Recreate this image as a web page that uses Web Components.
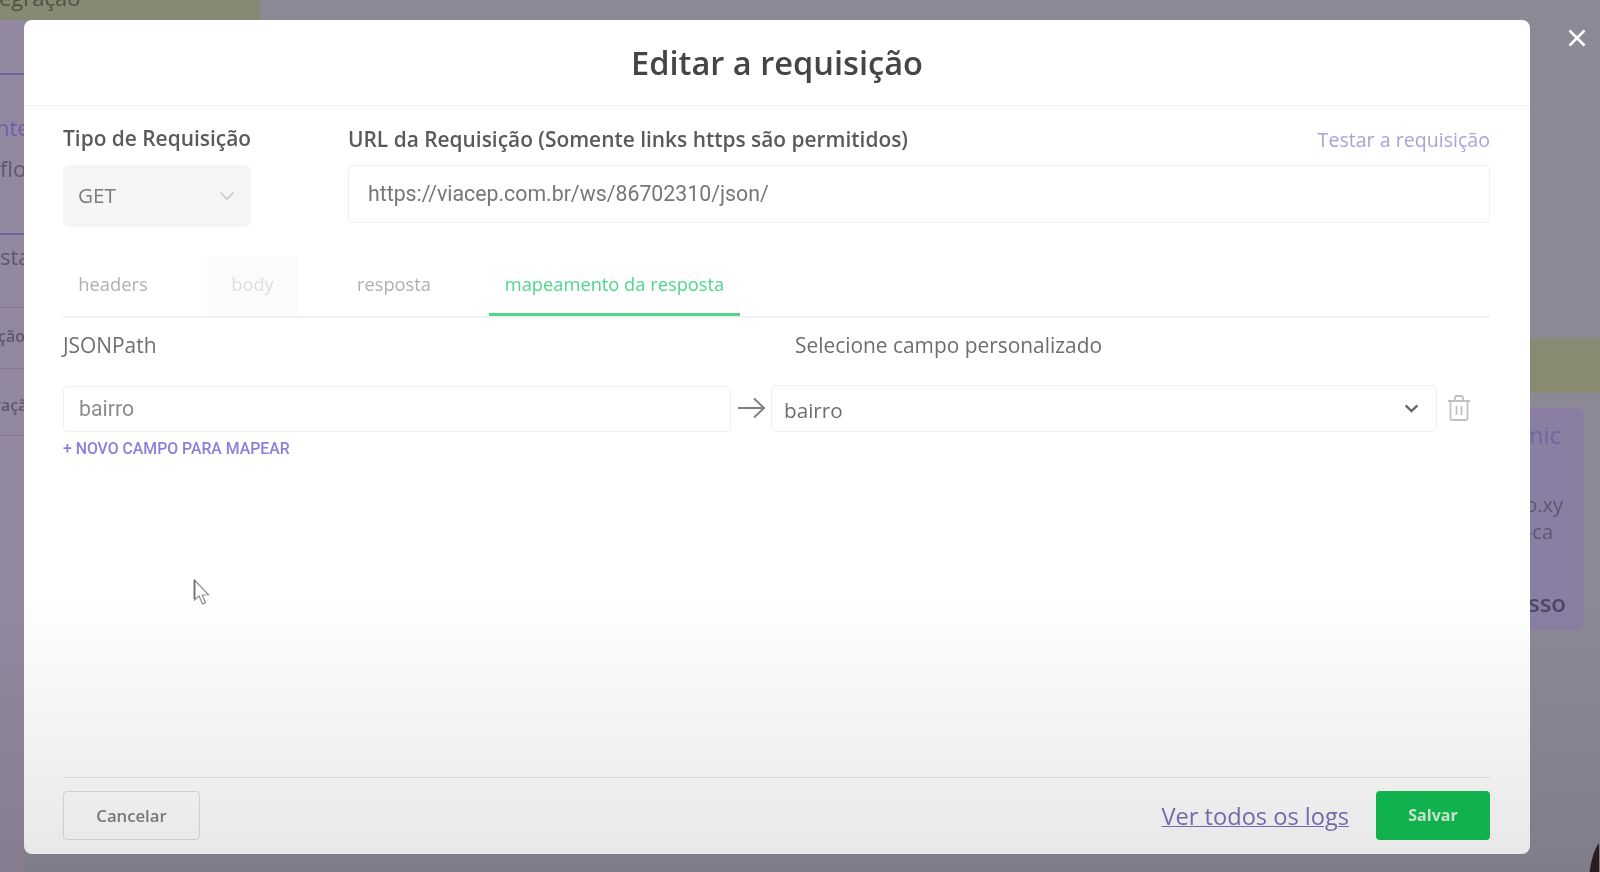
<!DOCTYPE html>
<html lang="pt-BR">
<head>
<meta charset="utf-8">
<title>Editar a requisição</title>
<style>
  html, body { margin: 0; height: 100%; overflow: hidden; background: #8c8997; }
  body { font-family: "Open Sans", "Liberation Sans", sans-serif; }
</style>
</head>
<body>
<req-page>
  <behind-page slot="behind"></behind-page>
  <req-modal>
    <span slot="title">Editar a requisição</span>
    <req-form></req-form>
    <req-button slot="cancel">Cancelar</req-button>
    <a slot="logs" href="#">Ver todos os logs</a>
    <req-button slot="save" kind="primary">Salvar</req-button>
  </req-modal>
</req-page>

<script>
function makeEl(name, html) {
    customElements.define(name, class extends HTMLElement {
        constructor() {
            super();
            this.attachShadow({mode: 'open'}).innerHTML = html;
        }
    });
}

makeEl('req-page', `
    <style>
        :host { display: block; position: relative; width: 1600px; height: 872px; overflow: hidden; background: #8c8997; filter: blur(.45px); }
        .modal { position: absolute; left: 24px; top: 20px; }
        .close { position: absolute; left: 1568px; top: 29px; width: 18px; height: 18px; }
        .cursor { position: absolute; left: 193px; top: 579px; width: 18px; height: 28px; }
        .fade { position: absolute; inset: 0; pointer-events: none;
            background: linear-gradient(to bottom, rgba(0,0,0,0) 0, rgba(0,0,0,0) 590px, rgba(30,30,30,.11) 872px); }
    </style>
    <slot name="behind"></slot>
    <div class="modal"><slot></slot></div>
    <svg class="close" viewBox="0 0 18 18" fill="none" stroke="#fff" stroke-width="2.6"><path d="M1.5 1.5l15 15M16.500 1.500l-15 15"/></svg>
    <svg class="cursor" viewBox="0 0 18 28"><path d="M1.500 1v20l4.600-4 3.400 8 3-1.300-3.300-7.700 6.300-.2z" fill="#fff" stroke="#8f8f8f" stroke-width="1.200"/><path d="M1.500 1v19" stroke="#6f6f6f" stroke-width="1.800"/></svg>
    <div class="fade"></div>`);

makeEl('behind-page', `
    <style>
        :host { display: block; position: absolute; inset: 0; color: #5f5670; font-size: 22px; }
        .top { display: flex; height: 20px; }
        .olive-top { width: 260px; background: #878a72; overflow: hidden; line-height: 16px; color: #4f5140; font-size: 22px; white-space: nowrap; }
        .olive-top span { display: block; margin: -11px 0 0 -1px; }
        .main { display: flex; height: 852px; }
        .left { width: 24px; background: #92889f; overflow: hidden; display: flex; flex-direction: column; }
        .gap { flex: none; }
        .rule { height: 2px; background: #6f60a6; flex: none; }
        .hair { height: 1px; background: #85798f; flex: none; }
        .t { white-space: nowrap; flex: none; height: 26px; line-height: 26px; }
        .t.small { height: 16px; line-height: 16px; font-size: 16px; font-weight: 600; }
        .mid { width: 1506px; }
        .right { width: 70px; display: flex; flex-direction: column; font-size: 20px; }
        .olive { height: 55px; margin-top: 318px; background: #888b72; flex: none; }
        .card { height: 222px; margin: 15px 16px 0 0; background: #8a7fa3; border-radius: 0 8px 8px 0; padding-top: 14px; box-sizing: border-box; flex: none; }
        .r { display: flex; justify-content: flex-end; line-height: 26px; white-space: nowrap; overflow: hidden; }
        .blob { position: absolute; right: 0; bottom: 0; width: 12px; height: 29px; }
    </style>
    <div class="top">
        <div class="olive-top"><span>egração</span></div>
    </div>
    <div class="main">
        <div class="left">
            <div class="gap" style="height:53px"></div><div class="rule"></div>
            <div class="gap" style="height:39px"></div>
            <div class="t" style="color:#6d5fa6;margin-left:-4px">nte</div>
            <div class="gap" style="height:15px"></div>
            <div class="t">flow</div>
            <div class="gap" style="height:52px"></div><div class="rule"></div>
            <div class="gap" style="height:8px"></div>
            <div class="t">sta</div>
            <div class="gap" style="height:38px"></div><div class="hair"></div>
            <div class="gap" style="height:20px"></div>
            <div class="t small" style="margin-left:-2px">ção</div>
            <div class="gap" style="height:24px"></div><div class="hair"></div>
            <div class="gap" style="height:28px"></div>
            <div class="t small" style="margin-left:-6px">raçã</div>
            <div class="gap" style="height:22px"></div><div class="hair"></div>
        </div>
        <div class="mid"></div>
        <div class="right">
            <div class="olive"></div>
            <div class="card">
                <div class="r" style="font-size:24px;color:#7465a0;padding-right:23px">mic</div>
                <div class="r" style="margin-top:44px;padding-right:21px">o.xy</div>
                <div class="r" style="padding-right:31px;margin-top:1px">-ca</div>
                <div class="r" style="margin-top:45px;padding-right:18px;font-size:24px;font-weight:600;color:#4e4763">sso</div>
            </div>
        </div>
    </div>
    <svg class="blob" viewBox="0 0 14 40"><path d="M14 0C7 9 3 24 1 40h13z" fill="#2a1c22"/></svg>`);

makeEl('req-modal', `
    <style>
        :host { display: flex; flex-direction: column; width: 1506px; height: 834px; background: #fff; border-radius: 8px; box-sizing: border-box; }
        header { height: 86px; border-bottom: 1px solid #f1f1f1; display: flex; align-items: center; justify-content: center; flex: none;
            font: 600 32.600px/40px "Open Sans", sans-serif; color: #454545; box-sizing: border-box; }
        .body { flex: 1; padding: 0 40px 0 39px; min-height: 0; }
        footer { margin: 0 40px 0 39px; height: 77px; border-top: 1px solid #e6e6e6; display: flex; align-items: flex-start; padding-top: 13px; box-sizing: border-box; flex: none; }
        .push { flex: 1; }
        ::slotted(a) { font: 400 23.600px/50px "Open Sans", sans-serif; color: #7a72b8; text-decoration: underline; text-decoration-thickness: 1px; margin-right: 27px; }
    </style>
    <header><slot name="title"></slot></header>
    <div class="body"><slot></slot></div>
    <footer>
        <slot name="cancel"></slot>
        <div class="push"></div>
        <slot name="logs"></slot>
        <slot name="save"></slot>
    </footer>`);

makeEl('req-button', `
    <style>
        :host { display: block; width: 137px; height: 49px; box-sizing: border-box; border: 1px solid #e0e0e0; border-radius: 4px;
            font: 600 16.700px/47px "Open Sans", sans-serif; color: #808080; text-align: center; }
        :host([kind=primary]) { width: 114px; border: 0; background: #0fc052; color: #d9f3dd; font-weight: 700; font-size: 16px; line-height: 49px; }
    </style>
    <slot></slot>`);

makeEl('field-label', `
    <style>
        :host { display: block; font: 600 20.900px/28px "Open Sans", sans-serif; color: #5a5a5a; white-space: nowrap; }
        :host([light]) { font-weight: 400; color: #6e6e6e; }
    </style>
    <slot></slot>`);

makeEl('text-box', `
    <style>
        :host { display: flex; align-items: center; box-sizing: border-box; border: 1px solid #f0f0f0; border-radius: 5px; background: #fff;
            font: 400 21.300px/28px Roboto, sans-serif; color: #707070; white-space: nowrap; }
    </style>
    <slot></slot>`);

makeEl('select-box', `
    <style>
        :host { display: flex; align-items: center; justify-content: space-between; box-sizing: border-box; border-radius: 6px;
            border: 1px solid #f0f0f0; background: #fff; font: 400 20.700px/28px "Open Sans", sans-serif; color: #6e6e6e; padding: 0 17px 0 12px; }
        :host([disabled]) { background: #f5f5f5; border-color: #f5f5f5; color: #7c7c7c; padding: 0 15px 0 14px; }
        .txt { position: relative; top: 1px; }
        :host([disabled]) .txt { top: -1px; }
        svg { width: 15px; height: 9px; fill: none; stroke: #666; stroke-width: 2.600; }
        :host([disabled]) svg { stroke: #c8c8c8; stroke-width: 1.600; width: 16px; height: 10px; }
    </style>
    <span class="txt"><slot></slot></span>
    <svg viewBox="0 0 16 10"><path d="M1.500 1.500L8 8l6.500-6.500"/></svg>`);

makeEl('tab-bar', `
    <style>
        :host { display: flex; height: 64px; border-bottom: 2px solid #f2f2f2; box-sizing: border-box; }
    </style>
    <slot></slot>`);

makeEl('tab-item', `
    <style>
        :host { display: flex; align-items: flex-start; justify-content: center; height: 62px; box-sizing: border-box; padding-top: 18px;
            font: 400 18.300px/24px "Open Sans", sans-serif; color: #b0b0b0; white-space: nowrap; }
        :host([disabled]) { background: #fbfbfb; color: #dfdfdf; margin-top: 2px; height: 60px; padding-top: 16px; }
        :host([active]) { color: #4fd68c; border-bottom: 3px solid #4fd68c; }
    </style>
    <slot></slot>`);

makeEl('req-form', `
    <style>
        :host { display: block; padding-top: 18px; }
        .top { display: flex; }
        .type { width: 285px; flex: none; }
        .url { flex: 1; }
        .url-head { display: flex; justify-content: space-between; align-items: center; margin-bottom: 11px; }
        .test { font: 400 19.600px/28px "Open Sans", sans-serif; color: #a8a3d8; margin-top: 2px; }
        .type field-label { margin-bottom: 13px; }
        select-box.get { width: 188px; height: 62px; }
        text-box.url-box { height: 58px; padding-left: 19px; color: #777; }
        tab-bar { margin-top: 27px; }
        .heads { display: flex; margin-top: 13px; height: 28px; }
        .heads field-label:first-child { width: 732px; }
        .row { display: flex; align-items: center; margin-top: 26px; height: 47px; }
        .row text-box { width: 668px; height: 46px; padding-left: 15px; color: #8c8c8c; }
        .arrow { width: 28px; height: 22px; margin: 0 5px 2px 7px; flex: none; }
        .row select-box { width: 666px; height: 47px; }
        .trash { width: 24px; height: 26px; margin: 0 0 2px 10px; flex: none; }
        .add { display: block; margin-top: 7px; font: 500 15.800px/20px Roboto, sans-serif; color: #8a7fdc; white-space: nowrap; }
    </style>
    <div class="top">
        <div class="type">
            <field-label>Tipo de Requisição</field-label>
            <select-box class="get" disabled>GET</select-box>
        </div>
        <div class="url">
            <div class="url-head">
                <field-label>URL da Requisição (Somente links https são permitidos)</field-label>
                <span class="test">Testar a requisição</span>
            </div>
            <text-box class="url-box">https://viacep.com.br/ws/86702310/json/</text-box>
        </div>
    </div>
    <tab-bar>
        <tab-item style="width:100px">headers</tab-item>
        <tab-item style="width:91px;margin-left:44px" disabled>body</tab-item>
        <tab-item style="width:74px;margin-left:59px">resposta</tab-item>
        <tab-item style="width:251px;margin-left:58px" active>mapeamento da resposta</tab-item>
    </tab-bar>
    <div class="heads">
        <field-label light>JSONPath</field-label>
        <field-label light>Selecione campo personalizado</field-label>
    </div>
    <div class="row">
        <text-box>bairro</text-box>
        <svg class="arrow" viewBox="0 0 28 22" fill="none" stroke="#808080" stroke-width="2"><path d="M0 11h26M16 1.500l10 9.500-10 9.500"/></svg>
        <select-box>bairro</select-box>
        <svg class="trash" viewBox="0 0 24 26" fill="none" stroke="#c2c2c2" stroke-width="1.800"><path d="M1 6h22M8 6V2.500A1.500 1.500 0 0 1 9.500 1h5A1.500 1.500 0 0 1 16 2.500V6M3.500 6v17a2 2 0 0 0 2 2h13a2 2 0 0 0 2-2V6M9.500 11v9M14.500 11v9"/></svg>
    </div>
    <span class="add">+ NOVO CAMPO PARA MAPEAR</span>`);
</script>
</body>
</html>
